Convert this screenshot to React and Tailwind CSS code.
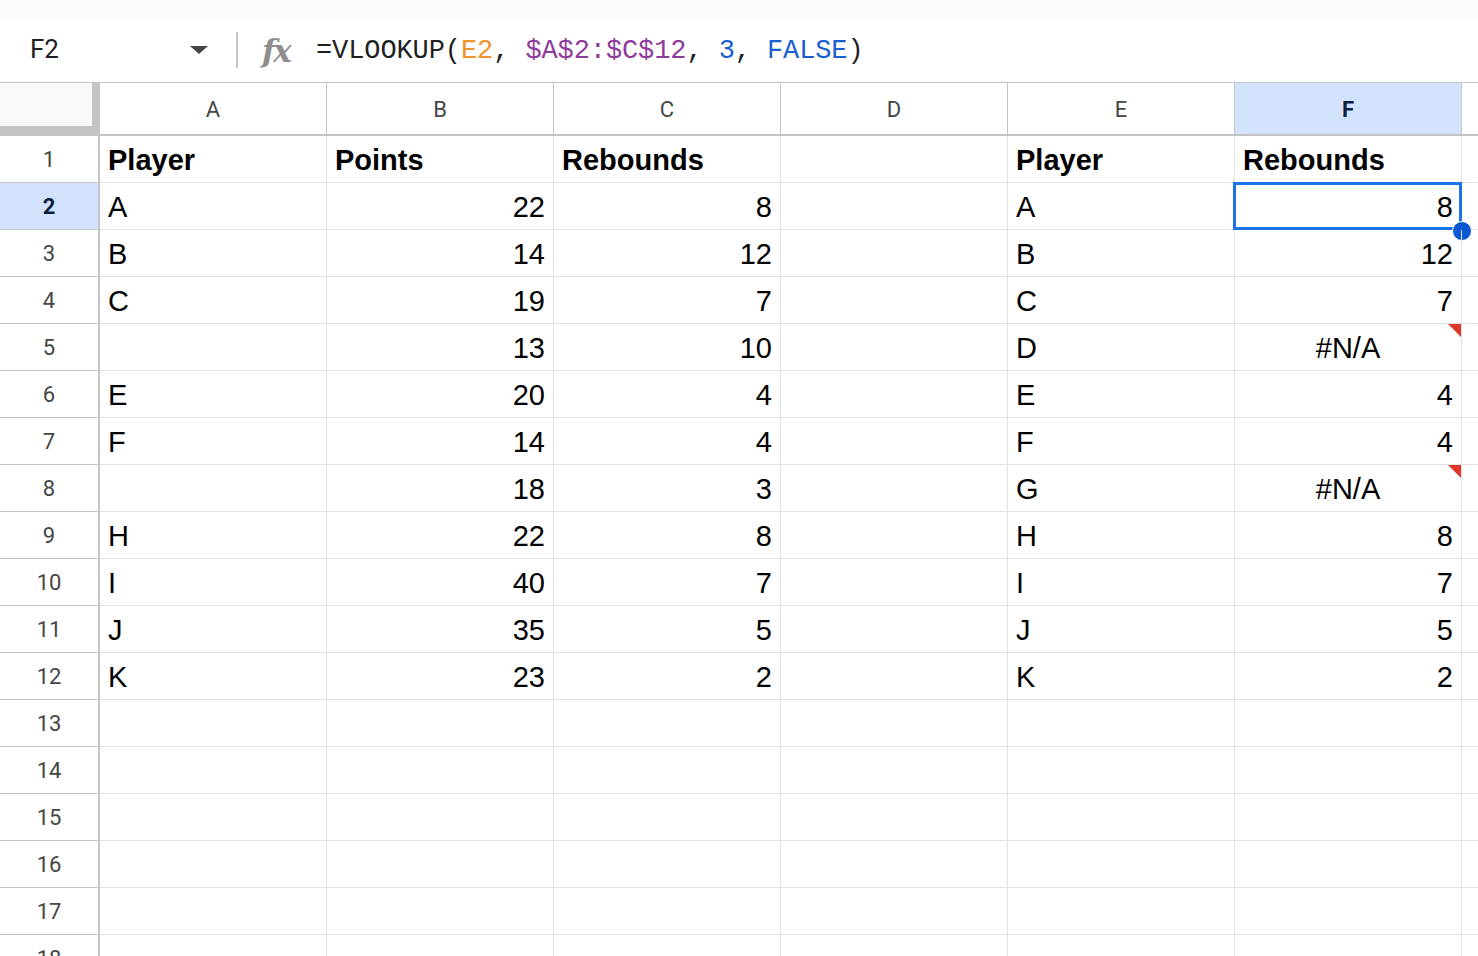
import { Fragment } from 'react'

const COLS = ['A', 'B', 'C', 'D', 'E', 'F']

// each row: [A, B, C, D, E, F]
const ROWS = [
  ['Player', 'Points', 'Rebounds', '', 'Player', 'Rebounds'],
  ['A', '22', '8', '', 'A', '8'],
  ['B', '14', '12', '', 'B', '12'],
  ['C', '19', '7', '', 'C', '7'],
  ['', '13', '10', '', 'D', '#N/A'],
  ['E', '20', '4', '', 'E', '4'],
  ['F', '14', '4', '', 'F', '4'],
  ['', '18', '3', '', 'G', '#N/A'],
  ['H', '22', '8', '', 'H', '8'],
  ['I', '40', '7', '', 'I', '7'],
  ['J', '35', '5', '', 'J', '5'],
  ['K', '23', '2', '', 'K', '2'],
]

const EMPTY_ROWS = 6 // 13 .. 18

export default function App() {
  return (
    <div className="w-[1478px] h-[956px] overflow-hidden bg-white font-['Liberation_Sans',Arial,sans-serif] text-black">
      <div className="h-[17px] bg-[#f9fbfd]" />
      <FormulaBar />
      <HeaderRow />
      {ROWS.map((row, i) => (
        <DataRow key={i} num={i + 1} cells={row} />
      ))}
      {Array.from({ length: EMPTY_ROWS }).map((_, i) => (
        <DataRow key={'e' + i} num={ROWS.length + i + 1} cells={['', '', '', '', '', '']} />
      ))}
    </div>
  )
}

function FormulaBar() {
  return (
    <div className="h-[65px] flex items-center">
      <div className="w-[236px] flex items-center pl-[30px] pr-[28px]">
        <span className="font-['Roboto',sans-serif] text-[26px] text-[#1f1f1f]">F2</span>
        <span className="ml-auto w-0 h-0 border-l-[9px] border-r-[9px] border-t-[8px] border-l-transparent border-r-transparent border-t-[#444746]" />
      </div>
      <div className="w-[2px] h-[36px] bg-[#c7c7c7]" />
      <span className="ml-[24px] w-[36px] mt-[4px] font-['DejaVu_Serif',serif] italic font-bold text-[31px] leading-none text-[#8e8e8e] tracking-[-2px]">
        fx
      </span>
      <div className="ml-[18px] mt-[3px] font-['Liberation_Mono',monospace] text-[27px] tracking-[-0.1px] text-[#1f1f1f] whitespace-pre">
        =VLOOKUP(<span className="text-[#f0932b]">E2</span>,{' '}
        <span className="text-[#8e3c9c]">$A$2:$C$12</span>,{' '}
        <span className="text-[#1a5fd0]">3</span>,{' '}
        <span className="text-[#1a5fd0]">FALSE</span>)
      </div>
    </div>
  )
}

function HeaderRow() {
  return (
    <div className="flex h-[54px] border-t border-[#c4c4c4]">
      <div className="w-[100px] shrink-0 bg-[#c4c4c4]">
        <div className="w-[92px] h-[43px] bg-[#f8f9fa]" />
      </div>
      {COLS.map((c) => (
        <div
          key={c}
          className={
            c === 'F'
              ? 'w-[227px] shrink-0 flex items-center justify-center pt-[2px] border-r border-b-2 border-[#c4c4c4] bg-[#d3e3fd] font-["Roboto",sans-serif] font-bold text-[22px] text-[#0b1f3f]'
              : 'w-[227px] shrink-0 flex items-center justify-center pt-[2px] border-r border-b-2 border-[#c4c4c4] font-["Roboto",sans-serif] text-[22px] text-[#444746]'
          }
        >
          {c}
        </div>
      ))}
      <div className="flex-1 border-b-2 border-[#c4c4c4]" />
    </div>
  )
}

function DataRow({ num, cells }) {
  const active = num === 2
  return (
    <div className="flex h-[47px]">
      <div
        className={
          active
            ? 'w-[100px] shrink-0 flex items-center justify-center pt-[1px] border-r-2 border-b border-[#c4c4c4] bg-[#d3e3fd] font-["Roboto",sans-serif] font-bold text-[22px] text-[#0b1f3f]'
            : 'w-[100px] shrink-0 flex items-center justify-center pt-[1px] border-r-2 border-b border-[#c4c4c4] font-["Roboto",sans-serif] text-[22px] text-[#444746]'
        }
      >
        {num}
      </div>
      {cells.map((v, ci) => (
        <Cell key={ci} value={v} col={ci} row={num} />
      ))}
      <div className="flex-1 border-b border-[#e1e1e1]" />
    </div>
  )
}

function Cell({ value, col, row }) {
  const isHeader = row === 1
  const isNum = /^\d+$/.test(value)
  const isErr = value === '#N/A'
  const selected = row === 2 && col === 5

  let align = 'justify-start pl-[8px]'
  if (isNum) align = 'justify-end pr-[8px]'
  if (isErr) align = 'justify-center'

  return (
    <div
      className={
        'relative w-[227px] shrink-0 flex items-center pt-[4px] border-r border-b border-[#e1e1e1] text-[29px] ' +
        align +
        (isHeader ? ' font-bold' : '')
      }
    >
      {value}
      {isErr && (
        <svg className="absolute top-0 right-0" width="13" height="13" viewBox="0 0 13 13">
          <path d="M0 0 H13 V13 Z" fill="#e0372b" />
        </svg>
      )}
      {selected && (
        <Fragment>
          <div className="absolute left-[-2px] top-[-1px] w-[229px] h-[48px] border-[3px] border-[#1a73e8]" />
          <div className="absolute right-[-11px] bottom-[-12px] w-[20px] h-[20px] rounded-full bg-[#0b57d0] border border-white" />
        </Fragment>
      )}
    </div>
  )
}
